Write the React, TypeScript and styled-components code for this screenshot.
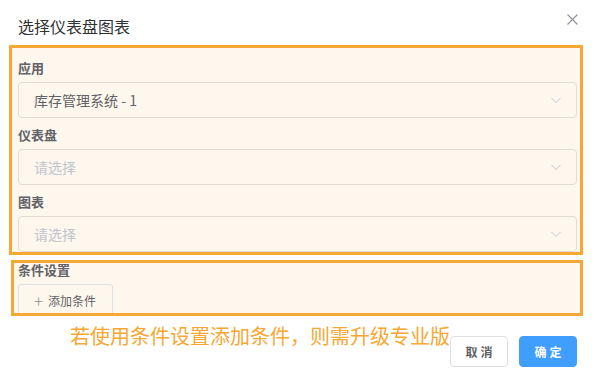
import React from 'react';
import styled, { createGlobalStyle } from 'styled-components';

const GlobalStyle = createGlobalStyle`
    html, body {
        margin: 0;
        padding: 0;
        background: #fff;
    }
    body {
        font-family: 'Noto Sans CJK SC', 'Noto Sans', 'Liberation Sans', sans-serif;
    }
`;

const fields = [
    { label: '应用', value: '库存管理系统 - 1' },
    { label: '仪表盘', value: '' },
    { label: '图表', value: '' },
];

const Chevron = () => (
    <svg width="12" height="12" viewBox="0 0 12 12" fill="none">
        <path d="M1.5 4l4.5 4.5L10.5 4" stroke="#c0c4cc" strokeWidth="1" />
    </svg>
);

const App: React.FC = () => (
    <>
        <GlobalStyle />
        <Dialog>
            <Header>
                <Title>选择仪表盘图表</Title>
                <CloseButton aria-label="关闭">
                    <svg width="11" height="11" viewBox="0 0 11 11">
                        <path d="M0.5 0.5l10 10M10.5 0.5l-10 10" stroke="#909399" strokeWidth="1.1" />
                    </svg>
                </CloseButton>
            </Header>
            <MainBox>
                {fields.map((f) => (
                    <Field key={f.label}>
                        <Label>{f.label}</Label>
                        <Select>
                            <SelectText $placeholder={!f.value}>{f.value || '请选择'}</SelectText>
                            <Chevron />
                        </Select>
                    </Field>
                ))}
            </MainBox>
            <ConditionBox>
                <Label>条件设置</Label>
                <AddButton>
                    <Plus>+</Plus>添加条件
                </AddButton>
            </ConditionBox>
            <Footer>
                <Note>若使用条件设置添加条件，则需升级专业版</Note>
                <Actions>
                    <Button>取消</Button>
                    <Button $primary>确定</Button>
                </Actions>
            </Footer>
        </Dialog>
    </>
);

const Dialog = styled.div`
    width: 594px;
    height: 378px;
    background: #fff;
    box-sizing: border-box;
    overflow: hidden;
`;

const Header = styled.header`
    display: flex;
    align-items: flex-start;
    justify-content: space-between;
    height: 45px;
    padding: 15px 18px 0 18px;
    box-sizing: border-box;
`;

const Title = styled.h2`
    margin: 0;
    font-size: 16px;
    line-height: 22px;
    font-weight: 400;
    color: #303133;
`;

const CloseButton = styled.button`
    background: none;
    border: none;
    padding: 0;
    margin-top: -1px;
    margin-right: -2px;
    cursor: pointer;
    line-height: 0;
`;

const Highlight = styled.section`
    border: 3px solid #f7a733;
    background: #fef7ee;
    box-sizing: border-box;
    overflow: hidden;
`;

const MainBox = styled(Highlight)`
    margin: 0 11px 0 9px;
    height: 210px;
    padding: 10px 3px 0 6px;
    display: flex;
    flex-direction: column;
    gap: 7px;
`;

const ConditionBox = styled(Highlight)`
    margin: 5px 11px 0 11px;
    height: 56px;
    padding: 0 4px;
`;

const Field = styled.div`
    display: flex;
    flex-direction: column;
    gap: 4px;
`;

const Label = styled.div`
    font-size: 13px;
    line-height: 20px;
    font-weight: 700;
    color: #606266;
    ${ConditionBox} & {
        margin-top: -2px;
        line-height: 17px;
    }
`;

const Select = styled.div`
    display: flex;
    align-items: center;
    justify-content: space-between;
    height: 36px;
    padding: 0 14px 0 15px;
    border: 1px solid #e1ddd6;
    border-radius: 4px;
    box-sizing: border-box;
`;

const SelectText = styled.span<{ $placeholder?: boolean }>`
    font-size: 14px;
    color: ${({ $placeholder }) => ($placeholder ? '#c0c4cc' : '#606266')};
`;

const AddButton = styled.button`
    display: flex;
    align-items: center;
    margin-top: 6px;
    height: 32px;
    padding: 0 16px 0 15px;
    border: 1px solid #dcdfe6;
    border-radius: 3px;
    background: transparent;
    font-family: inherit;
    font-size: 12px;
    color: #606266;
    cursor: pointer;
`;

const Plus = styled.span`
    font-size: 17px;
    font-weight: 300;
    margin-right: 5px;
    color: #909399;
`;

const Footer = styled.footer`
    display: flex;
    justify-content: space-between;
    align-items: flex-start;
    padding: 0 17px 0 70px;
`;

const Note = styled.p`
    margin: 6px 0 0 0;
    font-size: 20px;
    line-height: 28px;
    color: #f7a733;
    white-space: nowrap;
`;

const Actions = styled.div`
    display: flex;
    gap: 11px;
    margin-top: 20px;
`;

const Button = styled.button<{ $primary?: boolean }>`
    height: 31px;
    width: 58px;
    padding: 0;
    border-radius: 4px;
    border: 1px solid ${({ $primary }) => ($primary ? '#409eff' : '#dcdfe6')};
    background: ${({ $primary }) => ($primary ? '#409eff' : '#fff')};
    color: ${({ $primary }) => ($primary ? '#fff' : '#606266')};
    font-family: inherit;
    font-size: 12px;
    font-weight: 700;
    letter-spacing: 3px;
    text-indent: 3px;
    cursor: pointer;
`;

export default App;
